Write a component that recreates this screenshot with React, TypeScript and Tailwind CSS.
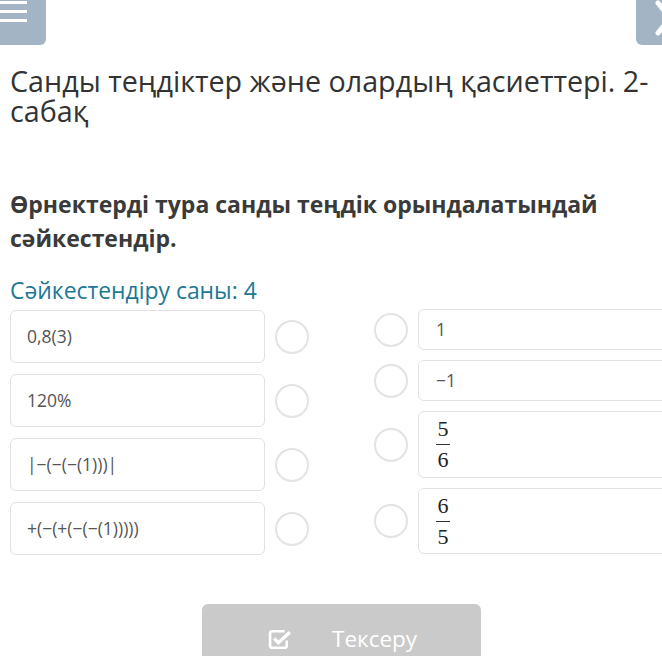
import React from "react";

const font = { fontFamily: '"Open Sans", "Noto Sans", sans-serif' };
const serif = { fontFamily: '"Liberation Serif", "Times New Roman", serif' };

function Circle() {
  return <div className="h-[34px] w-[34px] shrink-0 rounded-full border-[2px] border-[#e3e3e3] bg-white" />;
}

function Frac({ n, d }: { n: string; d: string }) {
  return (
    <span className="inline-flex flex-col items-center text-[22px] leading-[26px] text-[#222]">
      <span className="font-serif" style={serif}>{n}</span>
      <span className="my-[2px] h-[1px] w-[14px] bg-[#333]" />
      <span className="font-serif" style={serif}>{d}</span>
    </span>
  );
}

export default function App() {
  const left = ["0,8(3)", "120%", "|−(−(−(1)))|", "+(−(+(−(−(1)))))"];
  const right: { h: string; c: React.ReactNode }[] = [
    { h: "h-[41px]", c: <span className="text-[17.5px] text-[#555]">1</span> },
    { h: "h-[41px]", c: <span className="text-[17.5px] text-[#555]">−1</span> },
    { h: "h-[67px]", c: <Frac n="5" d="6" /> },
    { h: "h-[66px]", c: <Frac n="6" d="5" /> },
  ];
  return (
    <div className="relative h-[656px] w-[662px] overflow-hidden bg-white" style={font}>
      <div className="flex h-[46px] justify-between">
        <div className="flex h-[45px] w-[46px] flex-col gap-[6px] rounded-br-[6px] bg-[#a3b5c4] pt-[1px]">
          <div className="h-[3px] w-[27px] bg-white" />
          <div className="h-[3px] w-[27px] bg-white" />
          <div className="h-[3px] w-[27px] bg-white" />
        </div>
        <div className="relative h-[45px] w-[26px] overflow-hidden rounded-bl-[6px] bg-[#a3b5c4]">
          <svg className="absolute left-[19px] top-[0px]" width="30" height="40" viewBox="0 0 30 40">
            <path d="M3 3 L27 33 M27 3 L3 33" stroke="white" strokeWidth="5" strokeLinecap="round" />
          </svg>
        </div>
      </div>

      <h1 className="mt-[20px] pl-[10px] pr-[4px] text-[28.7px] font-normal leading-[30px] text-[#333]">
        Санды теңдіктер және олардың қасиеттері. 2-сабақ
      </h1>

      <h2 className="mt-[61px] pl-[10px] pr-[30px] text-[23px] font-bold leading-[34px] text-[#3a3a3a]">
        Өрнектерді тура санды теңдік орындалатындай сәйкестендір.
      </h2>

      <div className="mt-[21px] pl-[10px] text-[22.9px] leading-[30px] text-[#1d7896]">Сәйкестендіру саны: 4</div>

      <div className="mt-[-4px] flex">
        <div className="ml-[10px] flex w-[300px] flex-col gap-[11px] pt-[8px]">
          {left.map((t) => (
            <div key={t} className="flex items-center">
              <div className="flex h-[53px] w-[255px] items-center rounded-[6px] border border-[#e2e2e2] pl-[16px] text-[17.5px] text-[#555]">
                {t}
              </div>
              <div className="ml-[10px]">
                <Circle />
              </div>
            </div>
          ))}
        </div>
        <div className="ml-[65px] flex flex-col gap-[10px] pt-[7px]">
          {right.map((r, i) => (
            <div key={i} className="flex items-center">
              <Circle />
              <div className={`ml-[10px] flex w-[260px] items-center rounded-[6px] border border-[#e2e2e2] pl-[17px] ${r.h}`}>
                {r.c}
              </div>
            </div>
          ))}
        </div>
      </div>

      <div className="mt-[49px] flex">
        <div className="ml-[202px] flex h-[60px] w-[279px] items-start gap-[38px] rounded-t-[6px] bg-[#cacaca] pl-[66px] pt-[20px]">
          <svg width="26" height="21" viewBox="0 0 25 20" className="mt-[5px]">
            <path d="M16 2 H4 Q2 2 2 4 V16 Q2 18 4 18 H16 Q18 18 18 16 V11" fill="none" stroke="white" strokeWidth="2.5" />
            <path d="M6 9 L10 13 L21 3" fill="none" stroke="white" strokeWidth="3.2" />
          </svg>
          <span className="text-[22.5px] leading-[30px] text-white">Тексеру</span>
        </div>
      </div>
    </div>
  );
}
